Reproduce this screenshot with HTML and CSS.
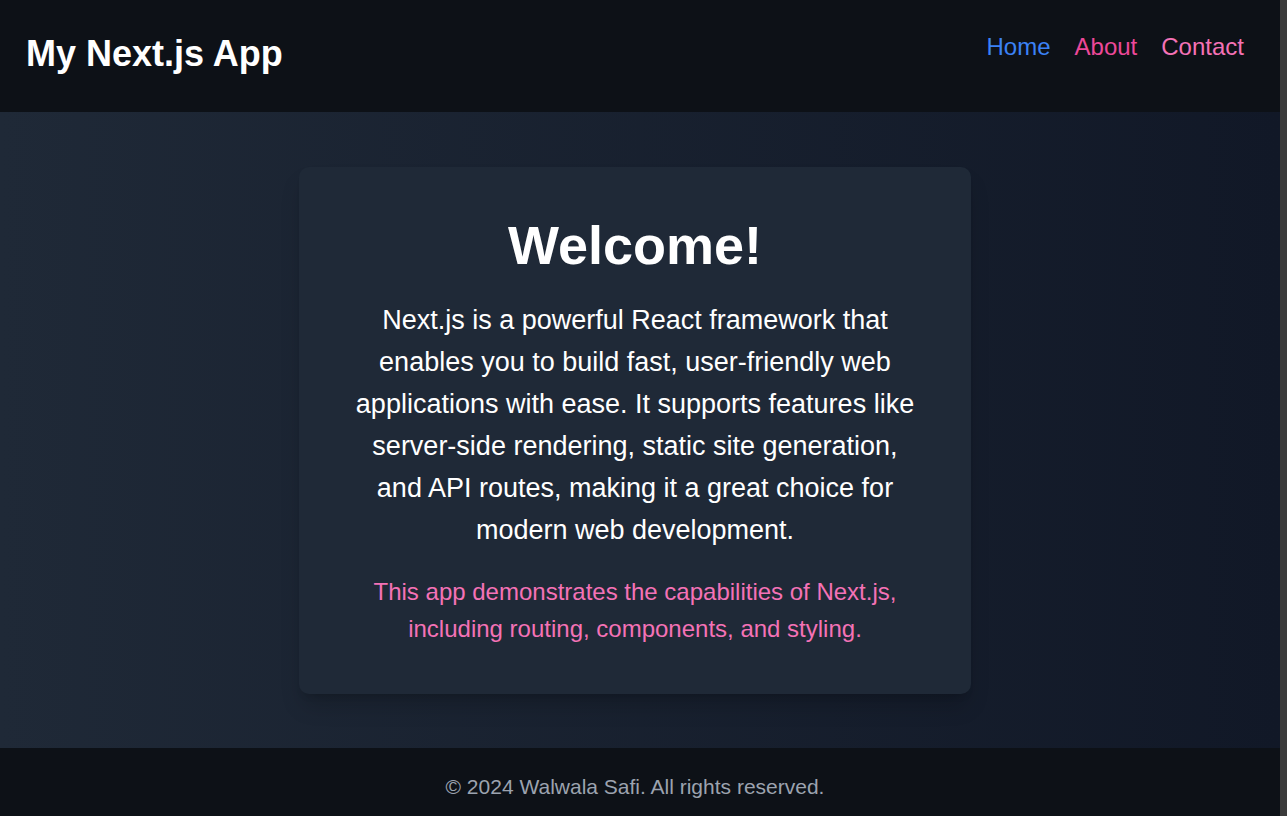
FILE: index.html
```html
<!DOCTYPE html>
<html lang="en">
<head>
<meta charset="utf-8">
<title>My Next.js App</title>
<link rel="stylesheet" href="styles.css">
</head>
<body>
<div class="page">
  <header class="site-header">
    <h1 class="brand">My Next.js App</h1>
    <nav class="nav">
      <a class="nav-link home" href="#">Home</a>
      <a class="nav-link about" href="#">About</a>
      <a class="nav-link contact" href="#">Contact</a>
    </nav>
  </header>
  <main class="main">
    <section class="card">
      <h2 class="title">Welcome!</h2>
      <p class="lead">Next.js is a powerful React framework that enables you to build fast, user-friendly web applications with ease. It supports features like server-side rendering, static site generation, and API routes, making it a great choice for modern web development.</p>
      <p class="note">This app demonstrates the capabilities of Next.js, including routing, components, and styling.</p>
    </section>
  </main>
  <footer class="site-footer">
    <p class="copy">© 2024 Walwala Safi. All rights reserved.</p>
  </footer>
</div>
<div class="scrollbar"></div>
</body>
</html>
```

FILE: styles.css
```css
html {
  overflow: hidden;
  background: #0d1117;
}
body {
  margin: 0;
  font-family: "Liberation Sans", Arial, sans-serif;
  color: #ffffff;
  background: #0d1117;
}
.page {
  width: calc(100% - 7px);
  display: flex;
  flex-direction: column;
}
.scrollbar {
  position: fixed;
  top: 0;
  right: 0;
  width: 7px;
  height: 100%;
  background: #3b3b3b;
}
.site-header {
  height: 112px;
  box-sizing: border-box;
  display: flex;
  align-items: center;
  justify-content: space-between;
  padding: 0 36px 0 26px;
  background: #0d1117;
}
.brand {
  margin: 0;
  font-size: 36px;
  font-weight: 700;
  line-height: 60px;
  color: #ffffff;
  position: relative;
  top: -2px;
}
.nav {
  display: flex;
  gap: 24px;
  position: relative;
  top: -9px;
}
.nav-link {
  font-size: 24px;
  line-height: 36px;
  text-decoration: none;
}
.home { color: #3b82f6; }
.about { color: #ec4899; }
.contact { color: #f472b6; }
.main {
  height: 636px;
  box-sizing: border-box;
  padding-right: 10px;
  display: flex;
  align-items: center;
  justify-content: center;
  background: linear-gradient(to right, #1f2937, #111827);
}
.card {
  width: 672px;
  box-sizing: border-box;
  padding: 48px 48px 47px;
  background: #1f2937;
  border-radius: 10px;
  box-shadow: 0 15px 22px -4px rgba(0, 0, 0, 0.18), 0 6px 9px -6px rgba(0, 0, 0, 0.18);
  text-align: center;
}
.title {
  margin: 0 0 24px;
  font-size: 54px;
  font-weight: 700;
  line-height: 60px;
}
.lead {
  margin: 0 0 22px;
  font-size: 27px;
  line-height: 42px;
  color: #ffffff;
}
.note {
  margin: 0;
  font-size: 24px;
  line-height: 37px;
  color: #f472b6;
}
.site-footer {
  padding: 24px 34px 24px 24px;
  background: #0d1117;
  text-align: center;
}
.copy {
  margin: 0;
  font-size: 21px;
  line-height: 30px;
  color: #9ca3af;
}
```
